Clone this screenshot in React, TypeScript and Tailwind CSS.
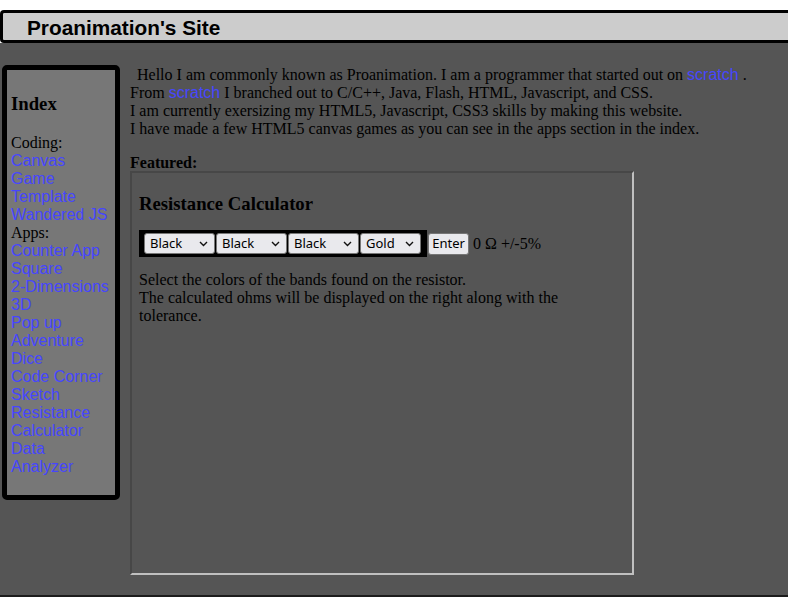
import React from "react";

const linkCls = "font-['Liberation_Sans',Arial,sans-serif] text-[#4646ff]";

function Chevron() {
  return (
    <svg width="9" height="6" viewBox="0 0 9 6" className="shrink-0">
      <path d="M1 1l3.5 3.5L8 1" fill="none" stroke="#111" strokeWidth="1.4" />
    </svg>
  );
}

function FakeSelect({ label, w }: { label: string; w: string }) {
  return (
    <div
      className={`flex h-[21px] ${w} items-center justify-between rounded-[3px] border border-[#767676] bg-[#e9e9ed] pl-[5px] pr-[6px] font-['Noto_Sans',sans-serif] text-[13px] leading-none text-black`}
    >
      <span>{label}</span>
      <Chevron />
    </div>
  );
}

const sideLines: { text: string; link?: boolean }[] = [
  { text: "Coding:" },
  { text: "Canvas", link: true },
  { text: "Game", link: true },
  { text: "Template", link: true },
  { text: "Wandered JS", link: true },
  { text: "Apps:" },
  { text: "Counter App", link: true },
  { text: "Square", link: true },
  { text: "2-Dimensions", link: true },
  { text: "3D", link: true },
  { text: "Pop up", link: true },
  { text: "Adventure", link: true },
  { text: "Dice", link: true },
  { text: "Code Corner", link: true },
  { text: "Sketch", link: true },
  { text: "Resistance", link: true },
  { text: "Calculator", link: true },
  { text: "Data", link: true },
  { text: "Analyzer", link: true },
];

export default function App() {
  return (
    <div className="min-h-screen overflow-hidden bg-white pt-[10px] font-['Liberation_Serif','Times_New_Roman',serif] text-black">
      {/* header bar */}
      <div className="flex h-[33px] items-center rounded-l-[4px] border-y-[3px] border-l-[3px] border-black bg-[#cccccc] pl-[24px] pt-[3px]">
        <h1 className="font-['Liberation_Sans',Arial,sans-serif] text-[20.8px] font-bold leading-none">
          Proanimation's Site
        </h1>
      </div>

      <div className="flex h-[554px] items-start border-b-2 border-[#1c1c1c] bg-[#555555] pl-[2px] pt-[22px]">
        {/* index */}
        <aside className="h-[435px] w-[118px] shrink-0 rounded-[5px] border-[5px] border-black bg-[#777777] p-[4px]">
          <h3 className="mt-[19px] text-[18.72px] font-bold leading-[21.5px]">Index</h3>
          <div className="mt-[19px] text-[16px] leading-[18px]">
            {sideLines.map((l, i) => (
              <div key={i} className={l.link ? linkCls : ""}>
                {l.text}
              </div>
            ))}
          </div>
        </aside>

        {/* content */}
        <div className="ml-[10px] flex-1 text-[16px] leading-[18px]">
          <p className="mt-[1px] indent-[7px] whitespace-nowrap">
            Hello I am commonly known as Proanimation. I am a programmer that started out on{" "}
            <span className={linkCls}>scratch</span> .
            <br />
            From <span className={linkCls}>scratch</span> I branched out to C/C++, Java, Flash, HTML, Javascript, and CSS.
            <br />
            I am currently exersizing my HTML5, Javascript, CSS3 skills by making this website.
            <br />
            I have made a few HTML5 canvas games as you can see in the apps section in the index.
          </p>

          <div className="mt-[16px] h-[17px] font-bold">Featured:</div>

          <div className="h-[404px] w-[504px] border-2 border-b-[#c0c0c0] border-l-[#474747] border-r-[#c0c0c0] border-t-[#474747] pl-[7px] pt-[20px]">
            <h3 className="text-[18.72px] font-bold leading-[22px]">Resistance Calculator</h3>

            <div className="mt-[15px] flex items-center">
              <div className="flex gap-[1px] bg-black py-[3px] pl-[5px] pr-[6px]">
                <FakeSelect label="Black" w="w-[71px]" />
                <FakeSelect label="Black" w="w-[71px]" />
                <FakeSelect label="Black" w="w-[71px]" />
                <FakeSelect label="Gold" w="w-[61px]" />
              </div>
              <div className="ml-[1px] flex h-[22px] w-[41px] items-center justify-center rounded-[3px] border border-[#767676] bg-[#e9e9ed] font-['Noto_Sans',sans-serif] text-[13px] leading-none">
                Enter
              </div>
              <span className="ml-[4px]">0 Ω +/-5%</span>
            </div>

            <p className="mt-[14px] whitespace-nowrap">
              Select the colors of the bands found on the resistor.
              <br />
              The calculated ohms will be displayed on the right along with the
              <br />
              tolerance.
            </p>
          </div>
        </div>
      </div>
    </div>
  );
}
